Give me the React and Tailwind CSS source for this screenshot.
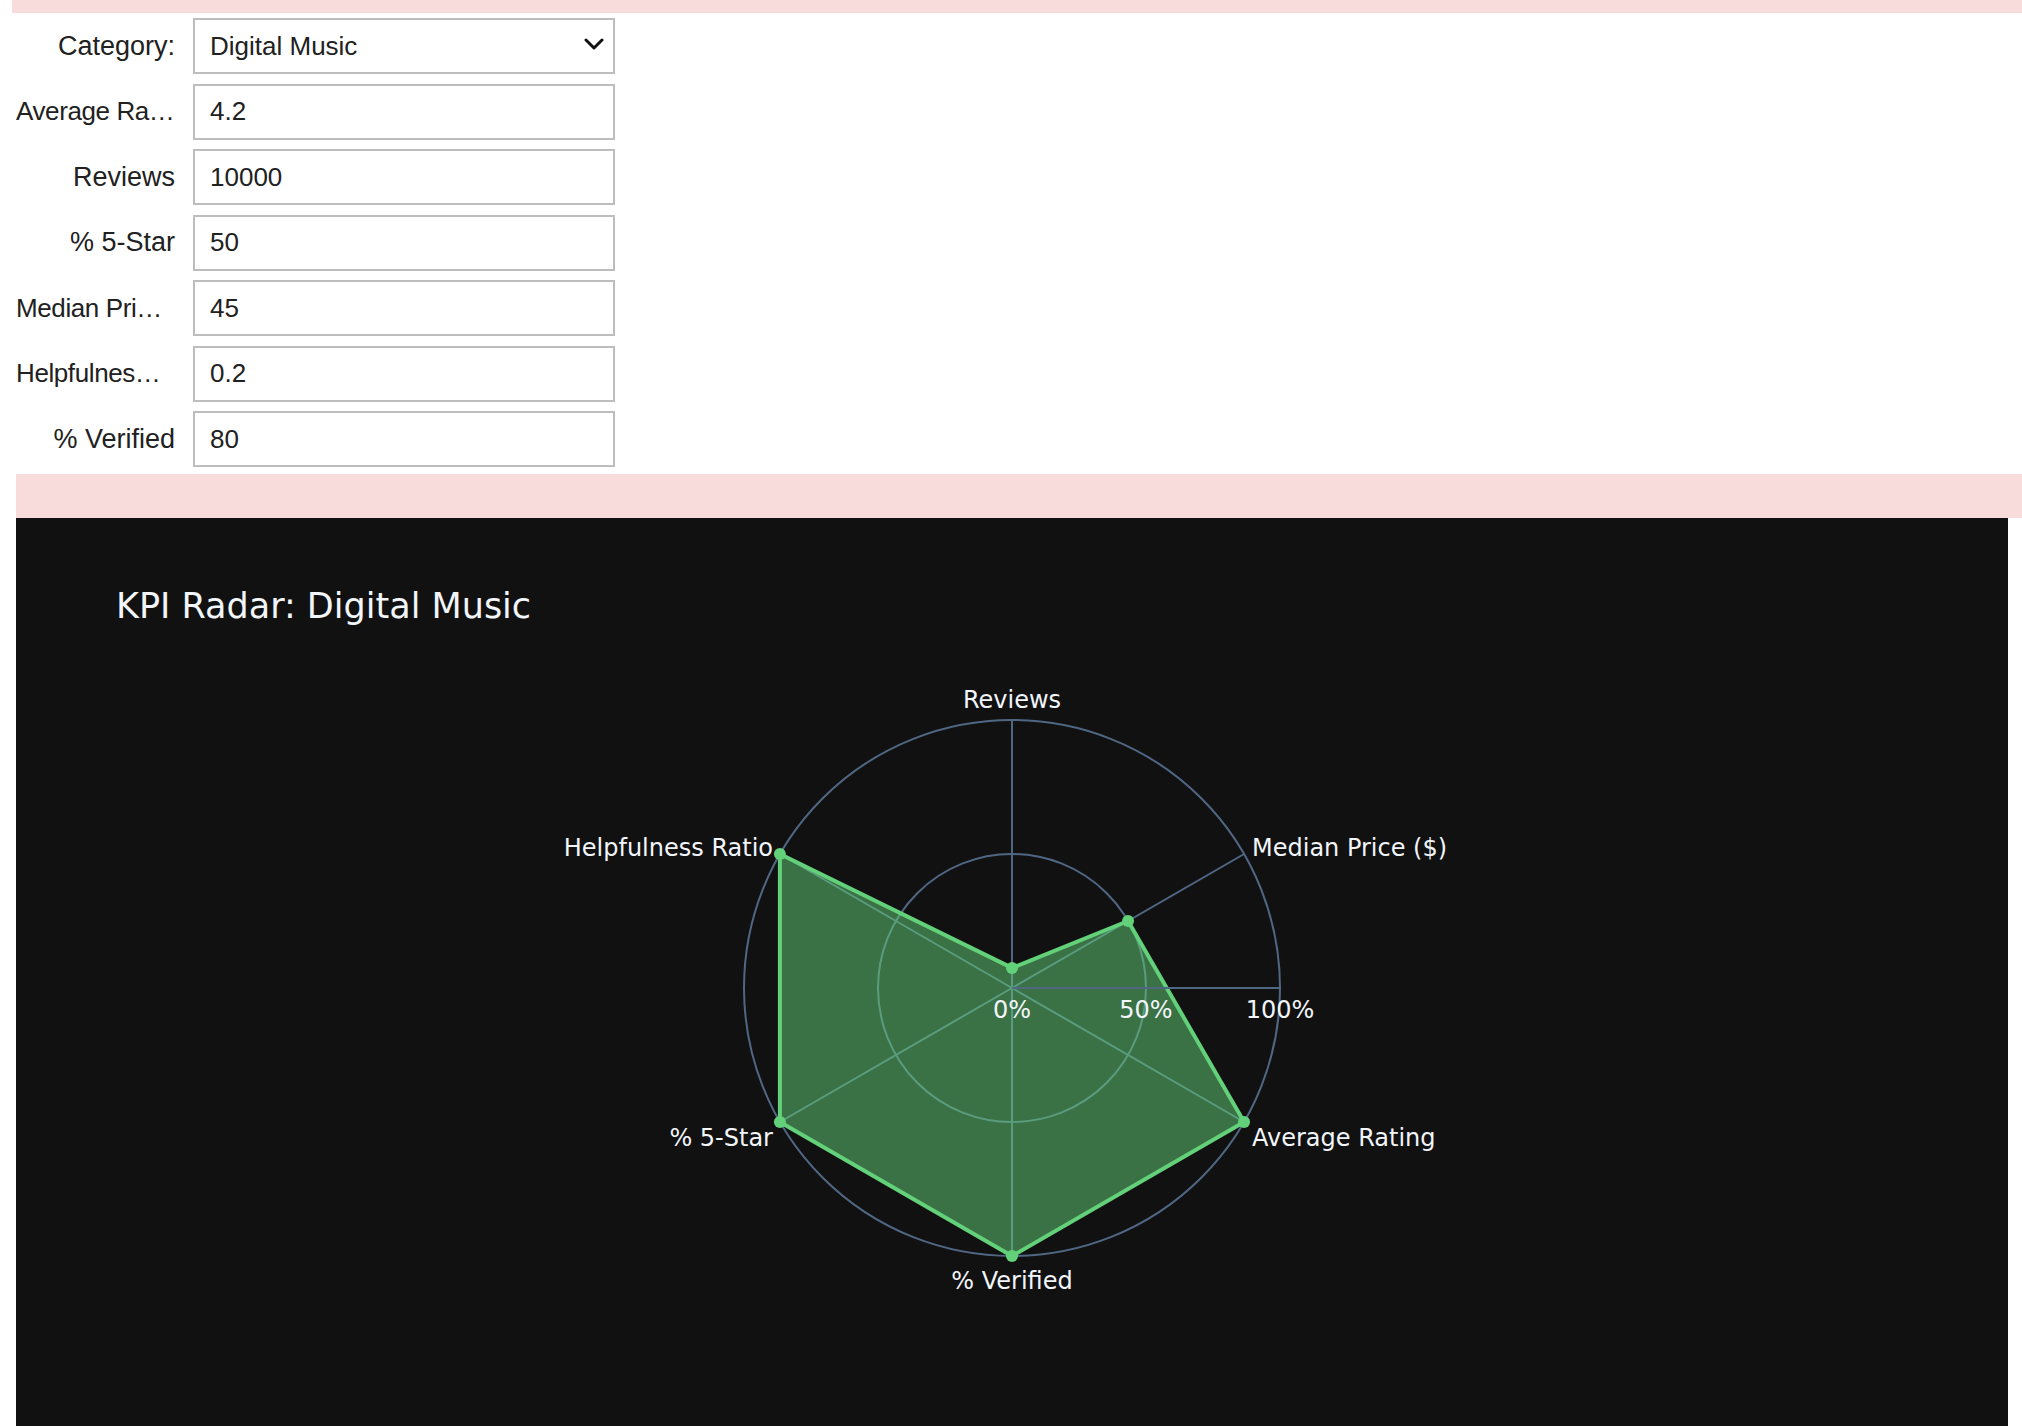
import React from "react";

const fields = [
  { label: "Average Ra…", value: "4.2", cut: true },
  { label: "Reviews", value: "10000" },
  { label: "% 5-Star", value: "50" },
  { label: "Median Pri…", value: "45", cut: true },
  { label: "Helpfulnes…", value: "0.2", cut: true },
  { label: "% Verified", value: "80" },
];

// radar geometry (svg coords)
const CX = 996;
const CY = 365;
const R = 268;

const axes = [
  { name: "Reviews", deg: 90, v: 0.075 },
  { name: "Median Price ($)", deg: 30, v: 0.5 },
  { name: "Average Rating", deg: -30, v: 1 },
  { name: "% Verified", deg: -90, v: 1 },
  { name: "% 5-Star", deg: -150, v: 1 },
  { name: "Helpfulness Ratio", deg: 150, v: 1 },
];

const pt = (deg, r) => {
  const a = (deg * Math.PI) / 180;
  return [CX + r * Math.cos(a), CY - r * Math.sin(a)];
};

const label = "font-['DejaVu_Sans',sans-serif] text-[24px] fill-[#f2f5fa]";

function Row({ label, cut, children }) {
  return (
    <div className="flex items-center h-[56px] pl-[16px]">
      <div
        className={`w-[159px] whitespace-nowrap text-[#212121] ${
          cut ? "text-left text-[26px] tracking-[-0.4px]" : "text-right text-[27px]"
        }`}
      >
        {label}
      </div>
      <div className="ml-[18px] w-[422px] h-[56px] border-2 border-[#bdbdbd] bg-white flex items-center justify-between pl-[15px] pr-[9px] text-[26px] text-[#212121]">
        {children}
      </div>
    </div>
  );
}

function Radar() {
  const poly = axes.map((a) => pt(a.deg, a.v * R).join(",")).join(" ");
  return (
    <svg width="1992" height="803" viewBox="0 0 1992 803" className="block">
      {/* grid */}
      <circle cx={CX} cy={CY} r={R / 2} fill="none" stroke="#506784" strokeWidth="2" />
      {axes.map((a) => {
        const [x, y] = pt(a.deg, R);
        return <line key={a.name} x1={CX} y1={CY} x2={x} y2={y} stroke="#506784" strokeWidth="2" />;
      })}

      {/* trace */}
      <polygon points={poly} fill="#63d17a" fillOpacity="0.5" stroke="#63d17a" strokeWidth="4" strokeLinejoin="round" />

      {/* axis lines above traces */}
      <circle cx={CX} cy={CY} r={R} fill="none" stroke="#506784" strokeWidth="2" />
      <line x1={CX} y1={CY} x2={CX + R} y2={CY} stroke="#506784" strokeWidth="2" />

      {axes.map((a) => {
        const [x, y] = pt(a.deg, a.v * R);
        return <circle key={a.name} cx={x} cy={y} r="6" fill="#63d17a" />;
      })}

      {/* radial ticks */}
      <text x={CX} y="395" textAnchor="middle" className={label}>0%</text>
      <text x={CX + 134} y="395" textAnchor="middle" className={label}>50%</text>
      <text x={CX + 268} y="395" textAnchor="middle" className={label}>100%</text>

      {/* angular labels */}
      <text x={CX} y="85" textAnchor="middle" className={label}>Reviews</text>
      <text x="1236" y="233" textAnchor="start" className={label}>Median Price ($)</text>
      <text x="1236" y="523" textAnchor="start" className={label}>Average Rating</text>
      <text x={CX} y="666" textAnchor="middle" className={label}>% Verified</text>
      <text x="757" y="523" textAnchor="end" className={label}>% 5-Star</text>
      <text x="757" y="233" textAnchor="end" className={label}>Helpfulness Ratio</text>
    </svg>
  );
}

export default function App() {
  return (
    <div className="bg-white w-[2022px] font-['Liberation_Sans',Arial,sans-serif]">
      <div className="ml-[12px] h-[13px] bg-[#f8dcdc]" />

      <div className="flex flex-col gap-[9.5px] mt-[5px]">
        <Row label="Category:">
          <span>Digital Music</span>
          <svg width="20" height="12" viewBox="0 0 20 12" className="mb-[5px]">
            <path d="M2 2 L10 10 L18 2" fill="none" stroke="#111" strokeWidth="3" strokeLinecap="round" strokeLinejoin="round" />
          </svg>
        </Row>
        {fields.map((f) => (
          <Row key={f.label} label={f.label} cut={f.cut}>
            <span>{f.value}</span>
          </Row>
        ))}
      </div>

      <div className="ml-[16px] mt-[7px] h-[44px] bg-[#f8dcdc]" />

      {/* plot */}
      <div className="ml-[16px] mr-[14px] h-[960px] bg-[#111111]">
        <div className="pl-[100px] pt-[71px] text-[35px] leading-[34px] text-[#f2f5fa] font-['DejaVu_Sans',sans-serif]">
          KPI Radar: Digital Music
        </div>
        <Radar />
      </div>
    </div>
  );
}
